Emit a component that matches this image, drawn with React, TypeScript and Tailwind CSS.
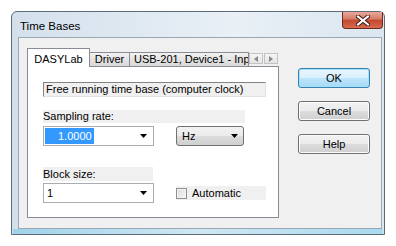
import { ChevronLeft } from 'lucide-react';

function Arrow() {
  return (
    <svg width="7" height="4" viewBox="0 0 7 4" className="shrink-0">
      <path d="M0 0h7L3.5 4z" fill="#000" />
    </svg>
  );
}

function Btn({ label, def }: { label: string; def?: boolean }) {
  return (
    <div
      className={
        'w-[72px] h-[20px] rounded-[3px] border flex items-center justify-center text-[11px] text-black ' +
        (def
          ? 'border-[#3c7fb1] bg-[linear-gradient(#eaf6fd_0%,#d9f0fc_50%,#bee6fd_50%,#a7d9f5_100%)] shadow-[inset_0_0_0_1px_#9ee3fb]'
          : 'border-[#707070] bg-[linear-gradient(#f2f2f2_0%,#ebebeb_50%,#dddddd_50%,#cfcfcf_100%)] shadow-[inset_0_0_0_1px_#fcfcfc]')
      }
    >
      {label}
    </div>
  );
}

export default function App() {
  return (
    <div className="w-[396px] h-[246px] bg-white pl-[11px] pt-[11px]" style={{ fontFamily: '"Liberation Sans", Arial, sans-serif' }}>
      <div className="w-[374px] h-[224px] rounded-t-[6px] border border-[#5f6b78] bg-[linear-gradient(90deg,#d3e0ec,#e9f0f6_60%,#dbe6f0)] flex flex-col">
        {/* title bar */}
        <div className="h-[25px] flex items-start justify-between">
          <span className="text-[11.5px] text-black pl-[8px] pt-[6px]">Time Bases</span>
          <div className="w-[41px] h-[17px] mr-[1px] rounded-b-[4px] border border-t-0 border-[#6d2b20] bg-[linear-gradient(#e9a99b,#d67a67_45%,#c2472f_50%,#d66a4f)] flex items-center justify-center">
            <svg width="14" height="11" viewBox="0 0 14 11">
              <path d="M2 1.5l10 8M12 1.5l-10 8" stroke="#3d1a14" strokeWidth="4" strokeLinecap="square" />
              <path d="M2 1.5l10 8M12 1.5l-10 8" stroke="#fff" strokeWidth="2" strokeLinecap="square" />
            </svg>
          </div>
        </div>
        {/* client area */}
        <div className="flex-1 ml-[6px] mr-[2px] border border-[#9aa8b6] bg-[#f0f0f0] flex pl-[8px] pt-[10px]">
          {/* tab control */}
          <div className="w-[252px] flex flex-col">
            <div className="flex items-end h-[18px] relative z-10">
              <div className="w-[63px] h-[18px] border border-b-0 border-[#898c95] bg-white text-[11px] text-black flex items-start justify-center pt-[2px] -mb-[1px] h-[19px]">
                DASYLab
              </div>
              <div className="w-[40px] h-[14px] border border-b-0 border-l-0 border-[#898c95] bg-[linear-gradient(#f2f2f2,#e3e3e3_50%,#d9d9d9)] text-[11px] text-black flex items-center justify-center">
                Driver
              </div>
              <div className="w-[119px] h-[14px] border border-b-0 border-l-0 border-[#898c95] bg-[linear-gradient(#f2f2f2,#e3e3e3_50%,#d9d9d9)] text-[11px] text-black flex items-center pl-[4px] overflow-hidden whitespace-nowrap">
                USB-201, Device1 - Input
              </div>
              <div className="flex mb-[2px] ml-[0px] gap-[1px]">
                <div className="w-[14px] h-[11px] border border-[#c3c3c3] bg-[linear-gradient(#f6f6f6,#e4e4e4)] flex items-center justify-center">
                  <svg width="4" height="6" viewBox="0 0 4 6"><path d="M4 0v6L0 3z" fill="#8a8a8a" /></svg>
                </div>
                <div className="w-[14px] h-[11px] border border-[#c3c3c3] bg-[linear-gradient(#f6f6f6,#e4e4e4)] flex items-center justify-center">
                  <svg width="4" height="6" viewBox="0 0 4 6"><path d="M0 0v6L4 3z" fill="#8a8a8a" /></svg>
                </div>
              </div>
            </div>
            <div className="h-[152px] border border-[#898c95] bg-white pl-[15px] pt-[15px] flex flex-col text-[11px] text-black">
              <div className="w-[223px] h-[15px] border border-[#838383] border-r-[#e3e3e3] border-b-[#e3e3e3] bg-[#f0f0f0] pl-[2px] leading-[13px] whitespace-nowrap overflow-hidden">
                Free running time base (computer clock)
              </div>
              <div className="mt-[13px] w-[202px] h-[13px] bg-[#f0f0f0] leading-[13px]">Sampling rate:</div>
              <div className="mt-[3px] flex items-center">
                <div className="w-[111px] h-[20px] border border-[#abadb3] bg-white flex items-center justify-between pl-[1px] pr-[6px]">
                  <span className="bg-[#3399ff] text-white h-[16px] leading-[16px] pl-[13px] pr-[2px]">1.0000</span>
                  <Arrow />
                </div>
                <div className="ml-[22px] w-[68px] h-[20px] rounded-[3px] border border-[#707070] bg-[linear-gradient(#f2f2f2_0%,#ebebeb_50%,#dddddd_50%,#cfcfcf_100%)] flex items-center justify-between pl-[5px] pr-[5px]">
                  <span>Hz</span>
                  <Arrow />
                </div>
              </div>
              <div className="mt-[21px] w-[110px] h-[14px] bg-[#f0f0f0] leading-[14px]">Block size:</div>
              <div className="mt-[2px] flex items-center">
                <div className="w-[111px] h-[20px] border border-[#abadb3] bg-white flex items-center justify-between pl-[3px] pr-[6px]">
                  <span>1</span>
                  <Arrow />
                </div>
                <div className="ml-[22px] w-[90px] h-[14px] bg-[#f0f0f0] flex items-center">
                  <div className="w-[11px] h-[11px] border border-[#8f8f8f] bg-[linear-gradient(135deg,#dcdcdc,#f6f6f6)] shadow-[inset_0_0_0_1px_#f4f4f4]" />
                  <span className="ml-[5px]">Automatic</span>
                </div>
              </div>
            </div>
          </div>
          {/* buttons */}
          <div className="ml-[19px] pt-[20px] flex flex-col gap-[13px]">
            <Btn label="OK" def />
            <Btn label="Cancel" />
            <Btn label="Help" />
          </div>
        </div>
        <div className="h-[5px] mx-[1px] bg-[linear-gradient(90deg,#9fd3ea,#cfe7f3_50%,#a9daee)]" />
      </div>
    </div>
  );
}
